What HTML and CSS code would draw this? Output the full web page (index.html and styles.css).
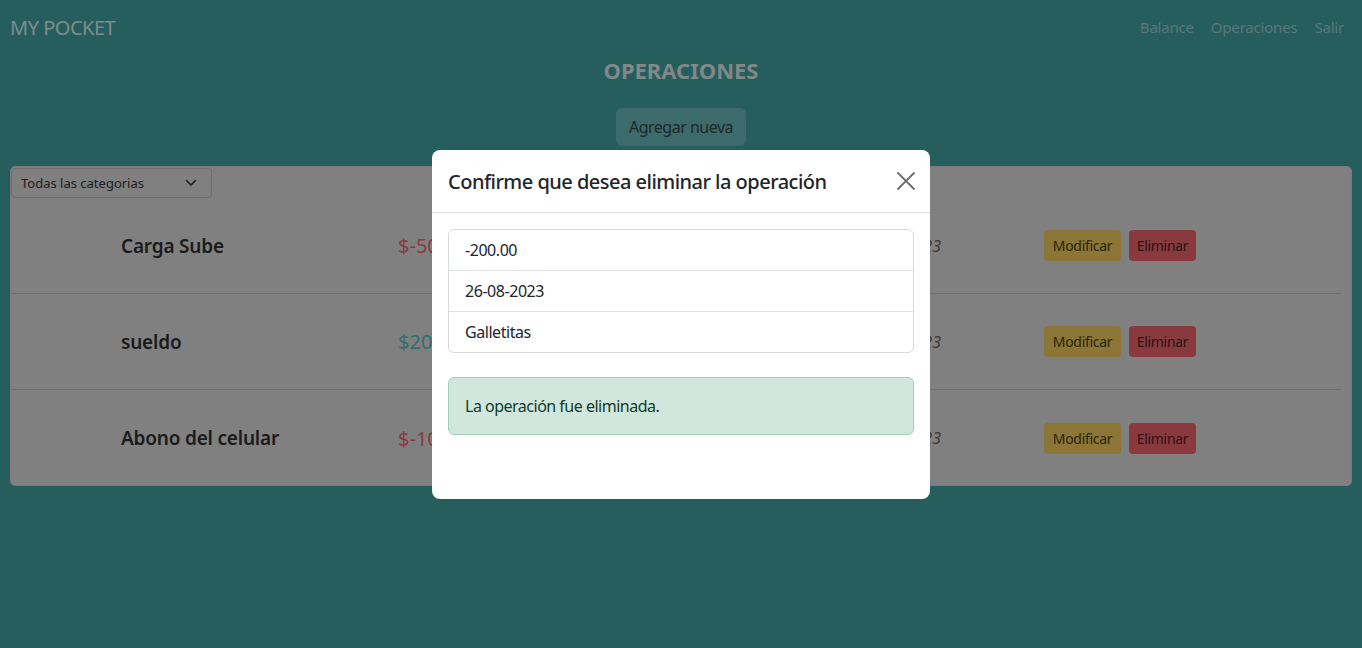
FILE: index.html
```html
<!DOCTYPE html>
<html lang="es">
<head>
<meta charset="utf-8">
<title>My Pocket - Operaciones</title>
<link rel="stylesheet" href="styles.css">
</head>
<body>
<header class="navbar">
  <span class="brand">MY POCKET</span>
  <nav class="nav-links">
    <a href="#">Balance</a>
    <a href="#">Operaciones</a>
    <a href="#">Salir</a>
  </nav>
</header>

<main class="page">
  <h1 class="page-title">OPERACIONES</h1>
  <div class="actions">
    <button class="btn-add">Agregar nueva</button>
  </div>

  <section class="card">
    <div class="filter">
      <div class="select">
        <span>Todas las categorias</span>
        <svg class="chev" width="12" height="8" viewBox="0 0 12 8"><path d="M1.5 1.5 6 6l4.5-4.5" fill="none" stroke="#1f1f1f" stroke-width="1.6" stroke-linecap="round" stroke-linejoin="round"/></svg>
      </div>
    </div>
    <div class="op-row">
      <span class="op-name">Carga Sube</span>
      <span class="op-amount neg">$-500.00</span>
      <span class="op-date">20-08-2023</span>
      <span class="op-btns"><button class="btn-mod">Modificar</button><button class="btn-del">Eliminar</button></span>
    </div>
    <div class="op-row">
      <span class="op-name">sueldo</span>
      <span class="op-amount pos">$200000.00</span>
      <span class="op-date">01-08-2023</span>
      <span class="op-btns"><button class="btn-mod">Modificar</button><button class="btn-del">Eliminar</button></span>
    </div>
    <div class="op-row">
      <span class="op-name">Abono del celular</span>
      <span class="op-amount neg">$-1000.00</span>
      <span class="op-date">10-08-2023</span>
      <span class="op-btns"><button class="btn-mod">Modificar</button><button class="btn-del">Eliminar</button></span>
    </div>
  </section>
</main>

<div class="modal">
  <div class="modal-header">
    <h5 class="modal-title">Confirme que desea eliminar la operación</h5>
    <button class="btn-close" aria-label="Cerrar">
      <svg width="18" height="18" viewBox="0 0 18 18"><path d="M1 1l16 16M17 1 1 17" stroke="#6c6c6c" stroke-width="1.8" stroke-linecap="round"/></svg>
    </button>
  </div>
  <div class="modal-body">
    <ul class="list-group">
      <li>-200.00</li>
      <li>26-08-2023</li>
      <li>Galletitas</li>
    </ul>
    <div class="alert">La operación fue eliminada.</div>
  </div>
</div>
</body>
</html>
```

FILE: styles.css
```css
* { box-sizing: border-box; }
html, body { margin: 0; padding: 0; }
body {
  background: #265e5e;
  font-family: "Noto Sans", "Open Sans", sans-serif;
  width: 1362px;
  height: 648px;
  overflow: hidden;
  color: #212529;
}
.navbar {
  display: flex;
  justify-content: space-between;
  align-items: center;
  height: 54px;
  padding: 0 18px 0 10px;
}
.brand {
  font-size: 20px;
  color: #7f8c8c;
  letter-spacing: -0.5px;
}
.nav-links { display: flex; gap: 17px; }
.nav-links a {
  color: #587878;
  text-decoration: none;
  font-size: 15px;
  letter-spacing: -0.2px;
}
.page { padding: 0 10px; }
.page-title {
  margin: 0;
  text-align: center;
  font-size: 22px;
  font-weight: 700;
  color: #828888;
  line-height: 32px;
}
.actions {
  display: flex;
  justify-content: center;
  padding-top: 22px;
}
.btn-add {
  font: inherit;
  font-size: 16px;
  letter-spacing: -0.5px;
  background: #3d6a6a;
  color: #1a2929;
  border: 0;
  border-radius: 6px;
  width: 130px;
  height: 38px;
}
.card {
  margin-top: 20px;
  background: #808080;
  border-radius: 5px;
  border: 1px solid #787c7c;
  width: 1342px;
  height: 320px;
  padding: 1px 10px 0 0;
}
.filter { display: flex; }
.select {
  width: 201px;
  height: 30px;
  border: 1px solid #6e6e6e;
  border-radius: 4px;
  display: flex;
  align-items: center;
  justify-content: space-between;
  padding: 0 14px 0 9px;
  font-size: 13px;
  color: #1c1c1c;
}
.op-row {
  display: grid;
  grid-template-columns: 277px 300px 243px 103px auto;
  align-items: center;
  height: 96px;
  padding-left: 110px;
  border-bottom: 1px solid #707070;
}
.op-row:last-child { border-bottom: 0; }
.op-name {
  font-size: 19px;
  font-weight: 600;
  color: #1b1b1b;
  letter-spacing: -0.2px;
}
.op-amount { font-size: 20px; }
.neg { color: #8b3a40; }
.pos { color: #2f6e6e; }
.op-date {
  font-style: italic;
  text-align: right;
  font-size: 16px;
  color: #3a3a3a;
}
.op-btns { grid-column: 5; display: flex; gap: 8px; }
.op-btns button {
  font: inherit;
  font-size: 14px;
  letter-spacing: -0.3px;
  border: 0;
  border-radius: 4px;
  height: 31px;
  padding: 0;
}
.btn-mod { background: #8c7636; color: #2a2410; width: 77px; }
.btn-del { background: #8a3a3f; color: #2a1214; width: 67px; }

.modal {
  position: absolute;
  left: 432px;
  top: 150px;
  width: 498px;
  height: 349px;
  background: #fff;
  border-radius: 8px;
}
.modal-header {
  display: flex;
  align-items: center;
  justify-content: space-between;
  height: 63px;
  padding: 0 14px 0 16px;
  border-bottom: 1px solid #dee2e6;
}
.modal-title {
  margin: 0;
  font-size: 20px;
  font-weight: 500;
  color: #212529;
  letter-spacing: -0.52px;
}
.btn-close {
  background: none;
  border: 0;
  padding: 0;
  width: 20px;
  height: 20px;
  display: flex;
  align-items: center;
  justify-content: center;
}
.modal-body { padding: 16px; }
.list-group {
  list-style: none;
  margin: 0;
  padding: 0;
  border: 1px solid #d7dadd;
  border-radius: 6px;
}
.list-group li {
  height: 41px;
  display: flex;
  align-items: center;
  padding-left: 16px;
  font-size: 16px;
  letter-spacing: -0.45px;
  color: #212529;
  border-bottom: 1px solid #dee2e6;
}
.list-group li:last-child { border-bottom: 0; height: 40px; }
.alert {
  margin-top: 24px;
  height: 58px;
  display: flex;
  align-items: center;
  padding-left: 16px;
  background: #d1e7dd;
  border: 1px solid #a3cfbb;
  border-radius: 6px;
  color: #0f3d2a;
  font-size: 16px;
  letter-spacing: -0.5px;
}
```
